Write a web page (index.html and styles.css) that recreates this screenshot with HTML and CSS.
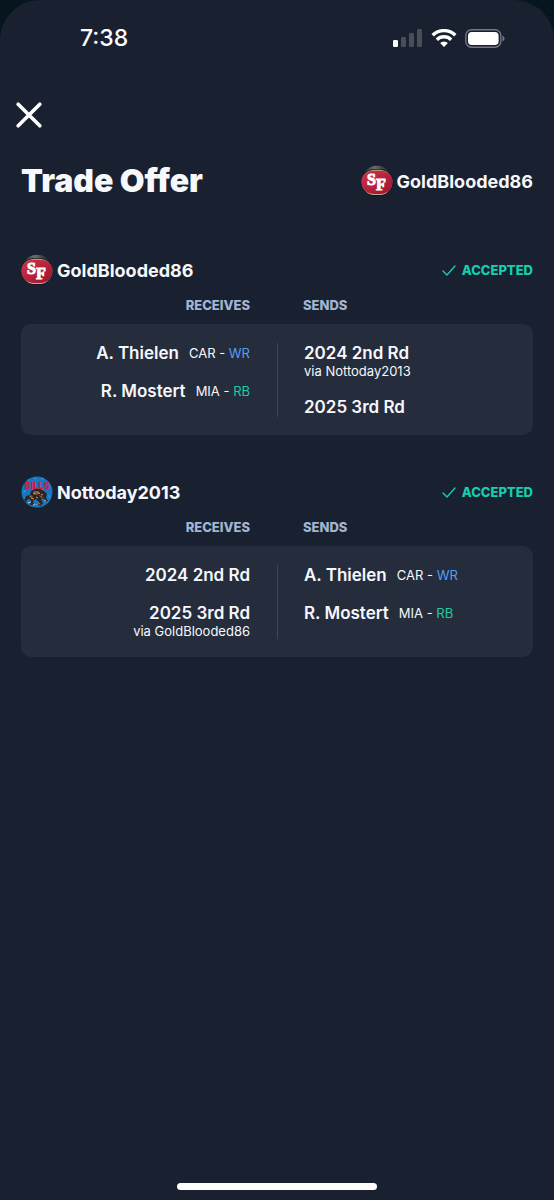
FILE: index.html
```html
<!DOCTYPE html>
<html lang="en">
<head>
    <meta charset="UTF-8">
    <meta name="viewport" content="width=device-width, initial-scale=1.0">
    <title>Trade Offer</title>
    <link rel="stylesheet" href="styles.css">
</head>
<body>
    <!-- shared logos -->
    <svg class="defs" aria-hidden="true">
        <defs>
            <linearGradient id="shine" x1="0" y1="0" x2="1" y2="0">
                <stop offset="0" stop-color="#15181d"/>
                <stop offset="0.4" stop-color="#6b6e73"/>
                <stop offset="1" stop-color="#101216"/>
            </linearGradient>
            <linearGradient id="red" x1="0" y1="0" x2="1" y2="1">
                <stop offset="0" stop-color="#d0344c"/>
                <stop offset="1" stop-color="#9c1230"/>
            </linearGradient>
            <clipPath id="round"><circle cx="16" cy="16" r="15.5"/></clipPath>
        </defs>
        <symbol id="logo-sf" viewBox="0 0 32 32">
            <g clip-path="url(#round)">
                <circle cx="16" cy="15.5" r="15" fill="url(#shine)"/>
                <rect x="0" y="4" width="32" height="27" rx="14" fill="#181216"/>
                <rect x="0.3" y="4.7" width="31.4" height="25.4" rx="14" fill="#c4ab86"/>
                <rect x="0" y="5.7" width="32" height="23.2" rx="13" fill="url(#red)"/>
            </g>
        </symbol>
        <symbol id="logo-bills" viewBox="0 0 32 32">
            <g clip-path="url(#round)">
                <rect width="32" height="32" fill="#1577c2"/>
                <path d="M5 3l3 1M13 2l2 1M20 3l3-1M2 16l3-1M27 19l2 3M4 22l2 3M14 29l3-1M24 27l3-2" stroke="#4b9bd0" stroke-width="1"/>
                <path d="M10 15l4-2 5 0 4 2 3 3-1 4 2 3-2 1-3-4-2 1 2 4-2 3-3-1 1-3-3-3-3 2 1 4-4 0 1-5-3-1-2 3-2-1 2-5 4-1z" fill="#2b2422"/>
                <path d="M13 15l4 0 2 2-3 2-4-1zM9 19l3 1-1 2-3-1zM18 19l3 1 1 2-3-1zM9 26l3 0M17 26l2 1 1 2-3-1z" fill="#8f5b39"/>
                <path d="M12 17l2 1M17 16l2 2M10 22l3 1M15 21l2 1M20 18l2 1" stroke="#c89a6b" stroke-width="1"/>
                <path d="M7 27l3-1M12 29l2-1M23 24l2 1" stroke="#b9c4cc" stroke-width="1"/>
                <path d="M24 27l3 0-1 2-2 0z" fill="#d01c3f"/>
            </g>
        </symbol>
        <symbol id="check" viewBox="0 0 14 12">
            <path d="M1 7l4 4 8-9" fill="none" stroke="#15ceb1" stroke-width="1.4" stroke-linecap="round" stroke-linejoin="round"/>
        </symbol>
    </svg>

    <div class="screen">
        <div class="status-bar">
            <span class="time">7:38</span>
            <div class="status-icons">
                <svg width="30" height="18" viewBox="0 0 30 18" aria-label="Signal">
                    <rect x="0" y="11" width="5" height="7" rx="1.3" fill="#fff"/>
                    <rect x="8" y="8" width="5" height="10" rx="1.3" fill="#484d58"/>
                    <rect x="16" y="4" width="5" height="14" rx="1.3" fill="#484d58"/>
                    <rect x="24" y="0" width="5" height="18" rx="1.3" fill="#484d58"/>
                </svg>
                <svg width="26" height="18" viewBox="0 0 26 18" aria-label="Wi-Fi">
                    <g fill="none" stroke="#fff" stroke-width="3.4">
                        <path d="M1.7 6.3a16 16 0 0 1 22.6 0"/>
                        <path d="M5.8 10.8a10.2 10.2 0 0 1 14.4 0"/>
                    </g>
                    <path d="M13 18l-3.9-4a5.6 5.6 0 0 1 7.8 0z" fill="#fff"/>
                </svg>
                <svg width="40" height="19" viewBox="0 0 40 19" aria-label="Battery">
                    <rect x="0.8" y="0.8" width="35" height="17.4" rx="5.6" fill="none" stroke="#737780" stroke-width="1.4"/>
                    <rect x="3" y="3" width="30.6" height="13" rx="3.8" fill="#fff"/>
                    <path d="M37.4 6.4q2.2 1 2.2 3.1t-2.2 3.1z" fill="#737780"/>
                </svg>
            </div>
        </div>

        <button class="close" aria-label="Close">
            <svg width="26" height="26" viewBox="0 0 26 26">
                <path d="M2.2 2.2l21.6 21.6M23.8 2.2L2.2 23.8" stroke="#fff" stroke-width="3.6" stroke-linecap="round"/>
            </svg>
        </button>

        <div class="header">
            <h1>Trade Offer</h1>
            <div class="user">
                <svg class="avatar" viewBox="0 0 32 32"><use href="#logo-sf"/><text class="logo-sf-text" x="6" y="20">S<tspan dy="5">F</tspan></text></svg>
                <span>GoldBlooded86</span>
            </div>
        </div>

        <div class="team">
            <div class="team-head">
                <div class="user">
                    <svg class="avatar" viewBox="0 0 32 32"><use href="#logo-sf"/><text class="logo-sf-text" x="6" y="20">S<tspan dy="5">F</tspan></text></svg>
                    <span>GoldBlooded86</span>
                </div>
                <div class="status"><svg class="check"><use href="#check"/></svg>ACCEPTED</div>
            </div>
            <div class="labels">
                <div class="receives">RECEIVES</div>
                <div class="sends">SENDS</div>
            </div>
            <div class="card">
                <div class="receives">
                    <div class="item"><span class="name">A. Thielen</span><span class="pos">CAR - <span class="wr">WR</span></span></div>
                    <div class="item"><span class="name">R. Mostert</span><span class="pos">MIA - <span class="rb">RB</span></span></div>
                </div>
                <div class="sends">
                    <div class="item"><span class="name">2024 2nd Rd</span><div class="via">via Nottoday2013</div></div>
                    <div class="item"><span class="name">2025 3rd Rd</span></div>
                </div>
            </div>
        </div>

        <div class="team">
            <div class="team-head">
                <div class="user">
                    <svg class="avatar" viewBox="0 0 32 32"><use href="#logo-bills"/><text class="logo-bills-text" x="16" y="13" text-anchor="middle">BILLS</text></svg>
                    <span>Nottoday2013</span>
                </div>
                <div class="status"><svg class="check"><use href="#check"/></svg>ACCEPTED</div>
            </div>
            <div class="labels">
                <div class="receives">RECEIVES</div>
                <div class="sends">SENDS</div>
            </div>
            <div class="card">
                <div class="receives">
                    <div class="item"><span class="name">2024 2nd Rd</span></div>
                    <div class="item"><span class="name">2025 3rd Rd</span><div class="via">via GoldBlooded86</div></div>
                </div>
                <div class="sends">
                    <div class="item"><span class="name">A. Thielen</span><span class="pos">CAR - <span class="wr">WR</span></span></div>
                    <div class="item"><span class="name">R. Mostert</span><span class="pos">MIA - <span class="rb">RB</span></span></div>
                </div>
            </div>
        </div>

        <div class="home-bar"></div>
    </div>
</body>
</html>
```

FILE: styles.css
```css
* {
    box-sizing: border-box;
}
body {
    margin: 0;
    background: #07151f;
    font-family: Inter, "Liberation Sans", sans-serif;
    color: #f6f8fc;
}
.defs {
    position: absolute;
    width: 0;
    height: 0;
}
.screen {
    display: flex;
    flex-direction: column;
    min-height: 100vh;
    padding: 0 21px 10px;
    background: #192030;
    border-radius: 40px 40px 0 0;
}

/* status bar */
.status-bar {
    display: flex;
    justify-content: space-between;
    align-items: center;
    height: 76px;
    padding: 0 28px 0 59px;
}
.time {
    font-size: 23px;
    font-weight: 500;
    color: #fff;
}
.status-icons {
    display: flex;
    align-items: center;
    gap: 8px;
}

.close {
    align-self: flex-start;
    display: flex;
    margin: 26px 0 0 -5px;
    padding: 0;
    background: none;
    border: none;
    cursor: pointer;
}

.header {
    display: flex;
    justify-content: space-between;
    align-items: center;
    margin-top: 33px;
}
h1 {
    margin: 0;
    font-size: 32px;
    line-height: 40px;
    font-weight: 900;
}
.user {
    display: flex;
    align-items: center;
    gap: 4px;
    font-size: 18px;
    font-weight: 700;
}
.avatar {
    width: 32px;
    height: 32px;
}
.logo-sf-text {
    font-family: "Liberation Serif", serif;
    font-size: 16px;
    font-weight: 700;
    fill: #fff;
    stroke: #fff;
    stroke-width: 1px;
}
.logo-bills-text {
    font-family: Inter, sans-serif;
    font-size: 9px;
    font-weight: 900;
    fill: #d01c42;
}

/* one block per team */
.team {
    margin-top: 53px;
}
.team + .team {
    margin-top: 41px;
}
.team-head {
    display: flex;
    justify-content: space-between;
    align-items: center;
}
.status {
    display: flex;
    align-items: center;
    gap: 6px;
    font-size: 13px;
    font-weight: 800;
    color: #15ceb1;
}
.check {
    width: 14px;
    height: 12px;
}
.labels,
.card {
    display: grid;
    grid-template-columns: 1fr 1fr;
}
.labels {
    margin: 11px 0;
    font-size: 13px;
    line-height: 16px;
    font-weight: 800;
    color: #a3b5d1;
}
.card {
    padding: 19px 0 18px;
    background: #252d3d;
    border-radius: 10px;
}
.receives {
    padding-right: 27px;
    text-align: right;
}
.sends {
    padding-left: 26px;
}
.card .sends {
    border-left: 1px solid #404756;
}
.item + .item {
    margin-top: 18px;
}
.item {
    line-height: 20px;
}
.name,
.pos {
    display: inline-block;
    vertical-align: top;
}
.name {
    font-size: 17px;
    font-weight: 600;
}
.pos {
    margin-left: 10px;
    font-size: 13px;
}
.via {
    font-size: 13px;
    line-height: 16px;
}
.wr {
    color: #589cf5;
}
.rb {
    color: #1fc8a4;
}

.home-bar {
    align-self: center;
    width: 36vw;
    height: 7px;
    margin-top: auto;
    background: #fff;
    border-radius: 4px;
}
```
